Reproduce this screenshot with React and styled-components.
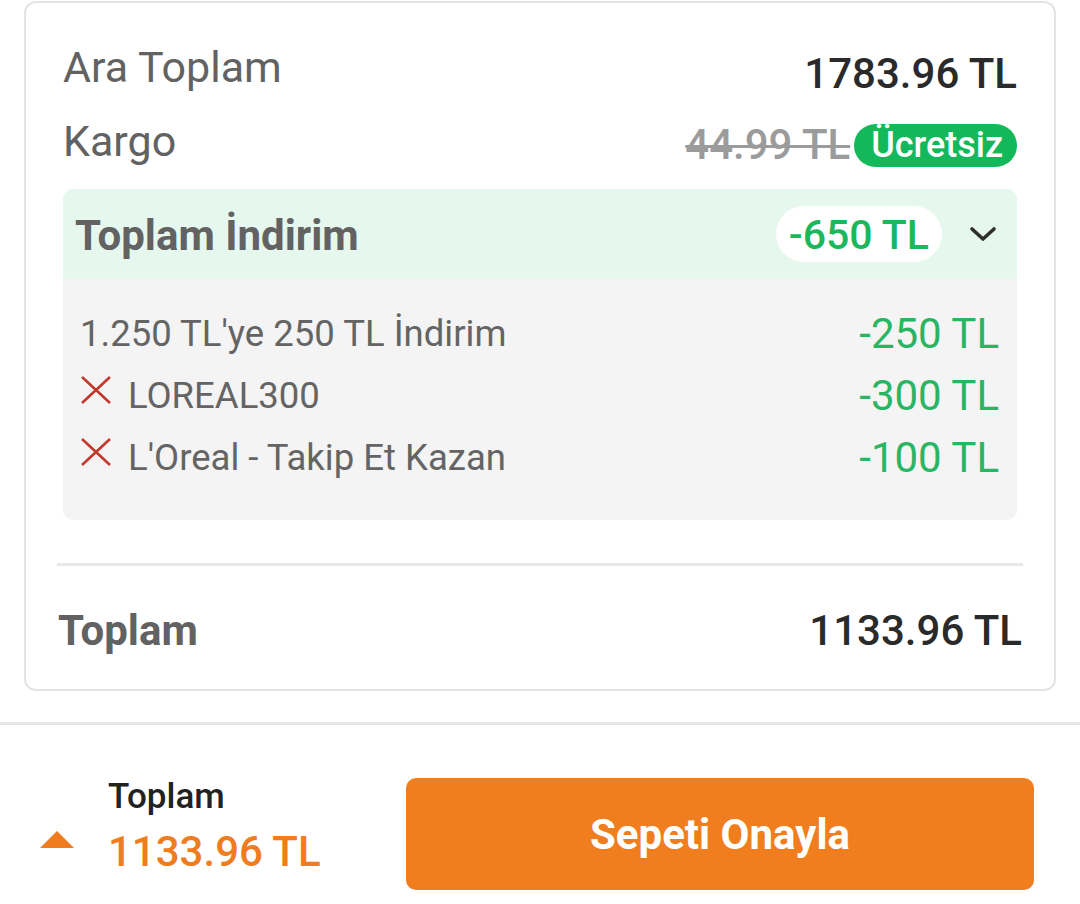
import React from 'react'
import styled, { createGlobalStyle } from 'styled-components'

const GlobalStyle = createGlobalStyle`
  * { box-sizing: border-box; }
  body {
    margin: 0;
    background: #ffffff;
    font-family: 'Roboto', 'Liberation Sans', sans-serif;
  }
`

const Page = styled.div`
  width: 1080px;
  height: 904px;
  display: flex;
  flex-direction: column;
  overflow: hidden;
`

const Card = styled.div`
  margin: 1px 24px 0;
  border: 2px solid #e4e4e4;
  border-radius: 12px;
  padding: 39px 0 33px;
`

const Lines = styled.div`
  padding: 0 37px;
`

const Row = styled.div`
  display: flex;
  justify-content: space-between;
  align-items: flex-start;
  margin-top: ${p => p.$gap || 0}px;
`

const Label = styled.span`
  font-size: ${p => (p.$bold ? 42 : 43)}px;
  line-height: 50px;
  color: #626262;
  font-weight: ${p => (p.$bold ? 700 : 400)};
`

const Amount = styled.span`
  font-size: 42px;
  line-height: 50px;
  font-weight: 500;
  color: #2a2a2a;
  margin-top: ${p => p.$shift || 0}px;
`

const Shipping = styled.div`
  display: flex;
  align-items: center;
  height: 50px;
  margin-top: 4px;
  gap: 4px;
`

const OldPrice = styled.span`
  font-size: 42px;
  line-height: 50px;
  font-weight: 500;
  color: #9b9b9b;
  text-decoration: line-through;
  text-decoration-thickness: 3px;
`

const FreeBadge = styled.span`
  height: 43px;
  padding: 0 14px 0 17px;
  border-radius: 22px;
  background: #12b85a;
  color: #ffffff;
  font-size: 36px;
  font-weight: 500;
  line-height: 43px;
`

const Discounts = styled.div`
  margin-top: 19px;
  border-radius: 10px;
  overflow: hidden;
  background: #f4f4f4;
`

const DiscountHead = styled.div`
  height: 90px;
  display: flex;
  align-items: center;
  padding: 0 20px 0 12px;
  background: #e6f7ee;
`

const HeadTitle = styled.span`
  flex: 1;
  font-size: 42px;
  font-weight: 700;
  color: #626262;
  line-height: 50px;
  padding-top: 4px;
`

const TotalPill = styled.span`
  height: 56px;
  padding: 0 13px;
  border-radius: 28px;
  background: #ffffff;
  color: #1cb75c;
  font-size: 41px;
  font-weight: 500;
  line-height: 58px;
`

const Chevron = styled.svg`
  margin-left: 27px;
  width: 28px;
  height: 16px;
`

const DiscountBody = styled.div`
  padding: 23px 18px 32px 17px;
`

const DiscountRow = styled.div`
  display: flex;
  align-items: center;
  height: 62px;
`

const Cross = styled.svg`
  width: 32px;
  height: 30px;
  margin: 0 16px 10px 0;
  flex: 0 0 auto;
`

const DiscountName = styled.span`
  flex: 1;
  font-size: 36.5px;
  color: #646464;
`

const DiscountValue = styled.span`
  font-size: 42px;
  color: #2ab563;
`

const Divider = styled.div`
  height: 3px;
  margin: 43px 31px 0;
  background: #e8e8e8;
`

const TotalRow = styled.div`
  display: flex;
  justify-content: space-between;
  padding: 0 32px 0 32px;
  margin-top: 40px;
`

const Footer = styled.div`
  margin-top: 31px;
  border-top: 3px solid #e6e6e6;
  display: flex;
  align-items: flex-start;
  padding: 52px 46px 0 40px;
`

const Summary = styled.div`
  display: flex;
  align-items: flex-end;
`

const Arrow = styled.svg`
  width: 34px;
  height: 17px;
  margin: 0 34px 30px 0;
`

const SummaryText = styled.div`
  display: flex;
  flex-direction: column;
`

const SummaryLabel = styled.span`
  font-size: 35px;
  font-weight: 500;
  line-height: 40px;
  color: #222222;
  margin-bottom: 9px;
`

const SummaryPrice = styled.span`
  font-size: 42px;
  font-weight: 500;
  line-height: 52px;
  color: #ef7d20;
`

const ConfirmButton = styled.button`
  margin: 1px 0 0 auto;
  width: 628px;
  height: 112px;
  border: 0;
  border-radius: 10px;
  background: #f07e1f;
  color: #ffffff;
  font-family: 'Roboto', 'Liberation Sans', sans-serif;
  font-size: 42px;
  font-weight: 700;
  cursor: pointer;
`

const discounts = [
  { name: "1.250 TL'ye 250 TL İndirim", value: '-250 TL', removable: false },
  { name: 'LOREAL300', value: '-300 TL', removable: true },
  { name: "L'Oreal - Takip Et Kazan", value: '-100 TL', removable: true },
]

const App = () => {
  return (
    <Page>
      <GlobalStyle />
      <Card>
        <Lines>
          <Row>
            <Label>Ara Toplam</Label>
            <Amount $shift={7}>1783.96 TL</Amount>
          </Row>
          <Row $gap={17}>
            <Label>Kargo</Label>
            <Shipping>
              <OldPrice>44.99 TL</OldPrice>
              <FreeBadge>Ücretsiz</FreeBadge>
            </Shipping>
          </Row>
          <Discounts>
            <DiscountHead>
              <HeadTitle>Toplam İndirim</HeadTitle>
              <TotalPill>-650 TL</TotalPill>
              <Chevron viewBox="0 0 28 16">
                <path d="M3 3 L14 13 L25 3" fill="none" stroke="#2e2e2e" strokeWidth="3.6" strokeLinecap="round" strokeLinejoin="round" />
              </Chevron>
            </DiscountHead>
            <DiscountBody>
              {discounts.map(d => (
                <DiscountRow key={d.name}>
                  {d.removable && (
                    <Cross viewBox="0 0 32 30">
                      <path d="M2 2 L30 28 M30 2 L2 28" stroke="#c0392b" strokeWidth="2.6" fill="none" />
                    </Cross>
                  )}
                  <DiscountName>{d.name}</DiscountName>
                  <DiscountValue>{d.value}</DiscountValue>
                </DiscountRow>
              ))}
            </DiscountBody>
          </Discounts>
        </Lines>
        <Divider />
        <TotalRow>
          <Label $bold>Toplam</Label>
          <Amount>1133.96 TL</Amount>
        </TotalRow>
      </Card>
      <Footer>
        <Summary>
          <Arrow viewBox="0 0 34 17">
            <path d="M17 0 L34 17 L0 17 Z" fill="#ef7d20" />
          </Arrow>
          <SummaryText>
            <SummaryLabel>Toplam</SummaryLabel>
            <SummaryPrice>1133.96 TL</SummaryPrice>
          </SummaryText>
        </Summary>
        <ConfirmButton>Sepeti Onayla</ConfirmButton>
      </Footer>
    </Page>
  )
}

export default App
